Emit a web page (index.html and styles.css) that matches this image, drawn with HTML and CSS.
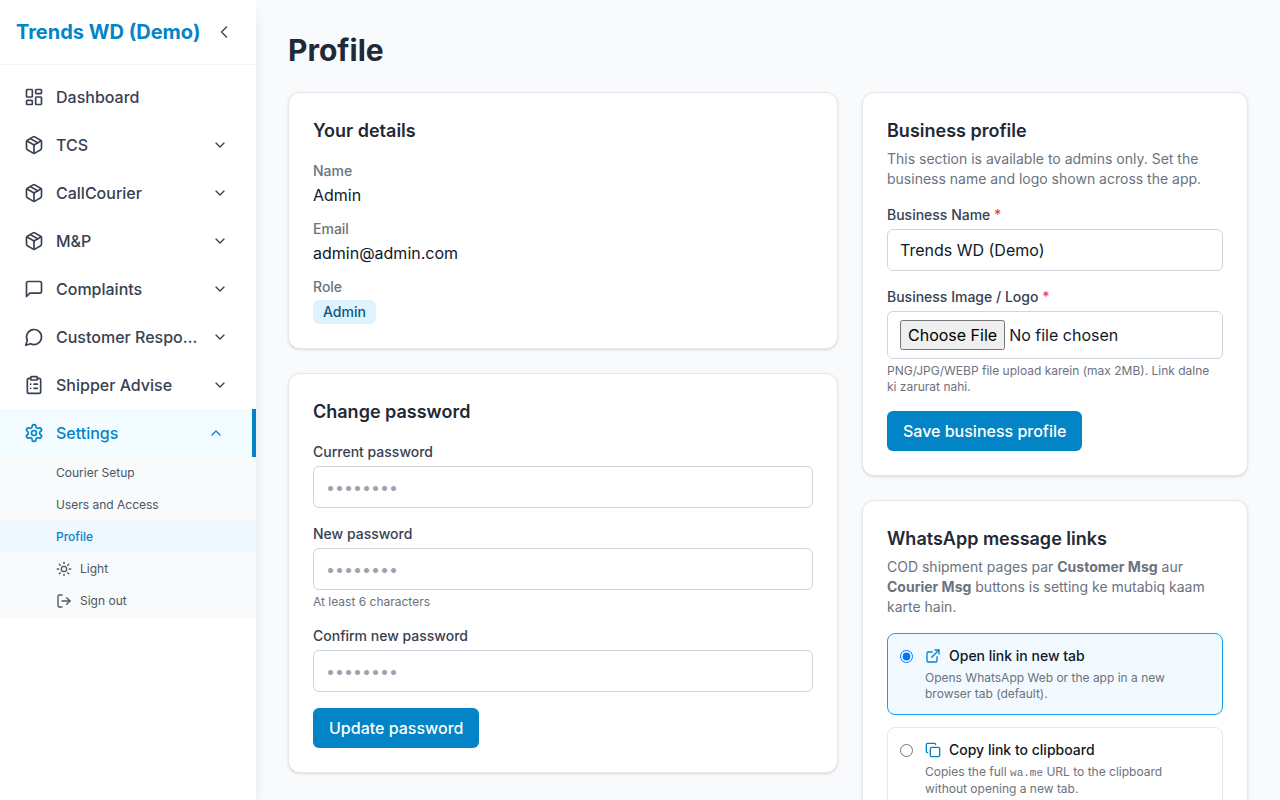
FILE: index.html
```html
<!DOCTYPE html>
<html lang="en">
<head>
    <meta charset="UTF-8">
    <meta name="viewport" content="width=device-width, initial-scale=1.0">
    <title>Profile - Trends WD (Demo)</title>
    <link rel="stylesheet" href="styles.css">
</head>
<body>
    <!-- shared icons -->
    <svg class="icon-defs" aria-hidden="true">
        <symbol id="icon-package" viewBox="0 0 24 24">
            <path d="m7.5 4.27 9 5.15"/>
            <path d="M21 8a2 2 0 0 0-1-1.73l-7-4a2 2 0 0 0-2 0l-7 4A2 2 0 0 0 3 8v8a2 2 0 0 0 1 1.73l7 4a2 2 0 0 0 2 0l7-4A2 2 0 0 0 21 16Z"/>
            <path d="m3.3 7 8.7 5 8.7-5"/>
            <path d="M12 22V12"/>
        </symbol>
        <symbol id="icon-down" viewBox="0 0 24 24">
            <path d="m6 9 6 6 6-6"/>
        </symbol>
    </svg>

    <div class="app">
        <aside class="sidebar">
            <div class="sidebar-header">
                <a href="#" class="brand">Trends WD (Demo)</a>
                <button type="button" class="collapse-btn" aria-label="Collapse sidebar">
                    <svg class="icon" viewBox="0 0 24 24"><path d="m15 18-6-6 6-6"/></svg>
                </button>
            </div>
            <nav class="nav">
                <a href="#" class="nav-item">
                    <svg class="icon" viewBox="0 0 24 24"><rect width="7" height="9" x="3" y="3" rx="1"/><rect width="7" height="5" x="14" y="3" rx="1"/><rect width="7" height="9" x="14" y="12" rx="1"/><rect width="7" height="5" x="3" y="16" rx="1"/></svg>
                    <span class="nav-text">Dashboard</span>
                </a>
                <button type="button" class="nav-item">
                    <svg class="icon"><use href="#icon-package"/></svg>
                    <span class="nav-text">TCS</span>
                    <svg class="icon icon-sm"><use href="#icon-down"/></svg>
                </button>
                <button type="button" class="nav-item">
                    <svg class="icon"><use href="#icon-package"/></svg>
                    <span class="nav-text">CallCourier</span>
                    <svg class="icon icon-sm"><use href="#icon-down"/></svg>
                </button>
                <button type="button" class="nav-item">
                    <svg class="icon"><use href="#icon-package"/></svg>
                    <span class="nav-text">M&amp;P</span>
                    <svg class="icon icon-sm"><use href="#icon-down"/></svg>
                </button>
                <button type="button" class="nav-item">
                    <svg class="icon" viewBox="0 0 24 24"><path d="M21 15a2 2 0 0 1-2 2H7l-4 4V5a2 2 0 0 1 2-2h14a2 2 0 0 1 2 2z"/></svg>
                    <span class="nav-text">Complaints</span>
                    <svg class="icon icon-sm"><use href="#icon-down"/></svg>
                </button>
                <button type="button" class="nav-item">
                    <svg class="icon" viewBox="0 0 24 24"><path d="M7.9 20A9 9 0 1 0 4 16.1L2 22Z"/></svg>
                    <span class="nav-text">Customer Response</span>
                    <svg class="icon icon-sm"><use href="#icon-down"/></svg>
                </button>
                <button type="button" class="nav-item">
                    <svg class="icon" viewBox="0 0 24 24"><rect width="8" height="4" x="8" y="2" rx="1" ry="1"/><path d="M16 4h2a2 2 0 0 1 2 2v14a2 2 0 0 1-2 2H6a2 2 0 0 1-2-2V6a2 2 0 0 1 2-2h2"/><path d="M12 11h4"/><path d="M12 16h4"/><path d="M8 11h.01"/><path d="M8 16h.01"/></svg>
                    <span class="nav-text">Shipper Advise</span>
                    <svg class="icon icon-sm"><use href="#icon-down"/></svg>
                </button>
                <button type="button" class="nav-item active" aria-expanded="true">
                    <svg class="icon" viewBox="0 0 24 24"><path d="M12.22 2h-.44a2 2 0 0 0-2 2v.18a2 2 0 0 1-1 1.73l-.43.25a2 2 0 0 1-2 0l-.15-.08a2 2 0 0 0-2.73.73l-.22.38a2 2 0 0 0 .73 2.73l.15.1a2 2 0 0 1 1 1.72v.51a2 2 0 0 1-1 1.74l-.15.09a2 2 0 0 0-.73 2.73l.22.38a2 2 0 0 0 2.73.73l.15-.08a2 2 0 0 1 2 0l.43.25a2 2 0 0 1 1 1.73V20a2 2 0 0 0 2 2h.44a2 2 0 0 0 2-2v-.18a2 2 0 0 1 1-1.73l.43-.25a2 2 0 0 1 2 0l.15.08a2 2 0 0 0 2.73-.73l.22-.39a2 2 0 0 0-.73-2.73l-.15-.08a2 2 0 0 1-1-1.74v-.5a2 2 0 0 1 1-1.74l.15-.09a2 2 0 0 0 .73-2.73l-.22-.38a2 2 0 0 0-2.73-.73l-.15.08a2 2 0 0 1-2 0l-.43-.25a2 2 0 0 1-1-1.73V4a2 2 0 0 0-2-2z"/><circle cx="12" cy="12" r="3"/></svg>
                    <span class="nav-text">Settings</span>
                    <svg class="icon icon-sm" viewBox="0 0 24 24"><path d="m18 15-6-6-6 6"/></svg>
                </button>
                <div class="submenu">
                    <a href="#" class="submenu-item">Courier Setup</a>
                    <a href="#" class="submenu-item">Users and Access</a>
                    <a href="#" class="submenu-item current" aria-current="page">Profile</a>
                    <button type="button" class="submenu-item">
                        <svg class="icon icon-sm" viewBox="0 0 24 24"><circle cx="12" cy="12" r="4"/><path d="M12 2v2"/><path d="M12 20v2"/><path d="m4.93 4.93 1.41 1.41"/><path d="m17.66 17.66 1.41 1.41"/><path d="M2 12h2"/><path d="M20 12h2"/><path d="m6.34 17.66-1.41 1.41"/><path d="m19.07 4.93-1.41 1.41"/></svg>
                        Light
                    </button>
                    <button type="button" class="submenu-item">
                        <svg class="icon icon-sm" viewBox="0 0 24 24"><path d="M9 21H5a2 2 0 0 1-2-2V5a2 2 0 0 1 2-2h4"/><path d="m16 17 5-5-5-5"/><path d="M21 12H9"/></svg>
                        Sign out
                    </button>
                </div>
            </nav>
        </aside>

        <main class="main">
            <h1>Profile</h1>
            <div class="grid">
                <div class="column column-wide">
                    <section class="card">
                        <h2>Your details</h2>
                        <dl class="details">
                            <div>
                                <dt>Name</dt>
                                <dd>Admin</dd>
                            </div>
                            <div>
                                <dt>Email</dt>
                                <dd>admin@admin.com</dd>
                            </div>
                            <div>
                                <dt>Role</dt>
                                <dd><span class="badge">Admin</span></dd>
                            </div>
                        </dl>
                    </section>

                    <section class="card">
                        <h2>Change password</h2>
                        <form class="form">
                            <div>
                                <label for="current-password">Current password</label>
                                <input type="password" id="current-password" class="input" placeholder="••••••••">
                            </div>
                            <div>
                                <label for="new-password">New password</label>
                                <input type="password" id="new-password" class="input" placeholder="••••••••">
                                <p class="hint">At least 6 characters</p>
                            </div>
                            <div>
                                <label for="confirm-password">Confirm new password</label>
                                <input type="password" id="confirm-password" class="input" placeholder="••••••••">
                            </div>
                            <button type="button" class="btn">Update password</button>
                        </form>
                    </section>
                </div>

                <div class="column column-narrow">
                    <section class="card">
                        <h2>Business profile</h2>
                        <p class="lead">This section is available to admins only. Set the business name and logo shown across the app.</p>
                        <form class="form">
                            <div>
                                <label for="business-name">Business Name <span class="required">*</span></label>
                                <input type="text" id="business-name" class="input" value="Trends WD (Demo)">
                            </div>
                            <div>
                                <label for="business-logo">Business Image / Logo <span class="required">*</span></label>
                                <input type="file" id="business-logo" class="input">
                                <p class="hint">PNG/JPG/WEBP file upload karein (max 2MB). Link dalne ki&nbsp;zarurat nahi.</p>
                            </div>
                            <button type="button" class="btn">Save business profile</button>
                        </form>
                    </section>

                    <section class="card">
                        <h2>WhatsApp message links</h2>
                        <p class="lead">COD shipment pages par <strong>Customer Msg</strong> aur <strong>Courier Msg</strong> buttons is setting ke mutabiq kaam karte hain.</p>
                        <div class="options">
                            <label class="option selected">
                                <input type="radio" name="link-mode" checked>
                                <span class="option-body">
                                    <span class="option-title">
                                        <svg class="icon icon-sm" viewBox="0 0 24 24"><path d="M15 3h6v6"/><path d="M10 14 21 3"/><path d="M18 13v6a2 2 0 0 1-2 2H5a2 2 0 0 1-2-2V8a2 2 0 0 1 2-2h6"/></svg>
                                        Open link in new tab
                                    </span>
                                    <span class="option-text">Opens WhatsApp Web or the app in a new browser tab (default).</span>
                                </span>
                            </label>
                            <label class="option">
                                <input type="radio" name="link-mode">
                                <span class="option-body">
                                    <span class="option-title">
                                        <svg class="icon icon-sm" viewBox="0 0 24 24"><rect width="14" height="14" x="8" y="8" rx="2" ry="2"/><path d="M4 16c-1.1 0-2-.9-2-2V4c0-1.1.9-2 2-2h10c1.1 0 2 .9 2 2"/></svg>
                                        Copy link to clipboard
                                    </span>
                                    <span class="option-text">Copies the full <code>wa.me</code> URL to the clipboard without&nbsp;opening a new tab.</span>
                                </span>
                            </label>
                        </div>
                    </section>
                </div>
            </div>
        </main>
    </div>
</body>
</html>
```
FILE: styles.css
```css
* {
    box-sizing: border-box;
    margin: 0;
    padding: 0;
}
body {
    font-family: Inter, "Liberation Sans", sans-serif;
    font-size: 16px;
    line-height: 24px;
    color: #111827;
    background-color: #f9fafc;
}
a {
    color: inherit;
    text-decoration: none;
}
button {
    font: inherit;
    color: inherit;
    background: none;
    border: none;
    cursor: pointer;
}
.icon-defs {
    display: none;
}
.icon {
    width: 20px;
    height: 20px;
    flex-shrink: 0;
    fill: none;
    stroke: currentColor;
    stroke-width: 2;
    stroke-linecap: round;
    stroke-linejoin: round;
}
.icon-sm {
    width: 16px;
    height: 16px;
}
.app {
    display: flex;
    height: 100vh;
    overflow: hidden;
}

/* Sidebar */
.sidebar {
    width: 256px;
    flex-shrink: 0;
    background-color: #fff;
    box-shadow: 0 10px 15px -3px rgba(0,0,0,0.1), 0 4px 6px -4px rgba(0,0,0,0.1);
}
.sidebar-header {
    display: flex;
    align-items: center;
    justify-content: space-between;
    height: 65px;
    padding: 0 16px;
    border-bottom: 1px solid #f3f4f6;
}
.brand {
    font-size: 20px;
    line-height: 28px;
    font-weight: 700;
    color: #0284c7;
}
.collapse-btn {
    display: flex;
    padding: 6px;
    color: #4b5563;
}
.nav {
    padding: 8px 0;
}
.nav-item {
    display: flex;
    align-items: center;
    gap: 12px;
    width: 100%;
    padding: 12px 28px 12px 24px;
    font-weight: 500;
    text-align: left;
    color: #374151;
}
.nav-text {
    flex: 1;
    min-width: 0;
    overflow: hidden;
    text-overflow: ellipsis;
    white-space: nowrap;
}
.nav-item.active {
    color: #0284c7;
    background-color: #f2fbff;
    border-right: 4px solid #0284c7;
}
.submenu {
    background-color: #f9fafc;
}
.submenu-item {
    display: flex;
    align-items: center;
    gap: 8px;
    width: 100%;
    padding: 8px 24px 8px 56px;
    font-size: 12px;
    line-height: 16px;
    color: #4b5563;
}
.submenu-item.current {
    font-weight: 500;
    color: #0284c7;
    background-color: #f0f8ff;
}

/* Content */
.main {
    flex: 1;
    min-width: 0;
    padding: 32px;
    overflow: hidden;
}
h1 {
    font-size: 30px;
    line-height: 36px;
    font-weight: 700;
    color: #1f2937;
    margin-bottom: 24px;
}
.grid {
    display: grid;
    grid-template-columns: repeat(12, minmax(0, 1fr));
    gap: 24px;
    align-items: start;
}
.column {
    display: flex;
    flex-direction: column;
    gap: 24px;
}
.column-wide {
    grid-column: span 7;
}
.column-narrow {
    grid-column: span 5;
}
.card {
    background-color: #fff;
    border: 1px solid #e5e7eb;
    border-radius: 12px;
    padding: 24px;
    box-shadow: 0 1px 3px rgba(0,0,0,0.1), 0 1px 2px -1px rgba(0,0,0,0.1);
}
h2 {
    font-size: 18px;
    line-height: 28px;
    font-weight: 600;
    color: #1f2937;
    margin-bottom: 16px;
}
h2:has(+ .lead) {
    margin-bottom: 4px;
}
.lead {
    font-size: 14px;
    line-height: 20px;
    color: #6b7280;
    margin-bottom: 16px;
}
.details {
    display: flex;
    flex-direction: column;
    gap: 12px;
}
.details dt {
    font-size: 14px;
    line-height: 20px;
    font-weight: 500;
    color: #6b7280;
}
.details dd {
    margin-top: 2px;
}
.badge {
    display: inline-flex;
    padding: 2px 10px;
    font-size: 14px;
    line-height: 20px;
    font-weight: 500;
    color: #075985;
    background-color: #e0f2fe;
    border-radius: 6px;
}

/* Forms */
.form {
    display: flex;
    flex-direction: column;
    align-items: flex-start;
    gap: 16px;
}
.form > div {
    width: 100%;
}
.form label {
    display: block;
    font-size: 14px;
    line-height: 20px;
    font-weight: 500;
    color: #374151;
    margin-bottom: 4px;
}
.required {
    color: #ef4444;
}
.input {
    display: block;
    width: 100%;
    padding: 8px 12px;
    font: inherit;
    color: #111827;
    background-color: #fff;
    border: 1px solid #d1d5db;
    border-radius: 6px;
}
.input::placeholder {
    color: #9ca3af;
}
.input::file-selector-button {
    font: inherit;
    padding: 3px 6px;
}
.hint {
    font-size: 12px;
    line-height: 16px;
    color: #6b7280;
    margin-top: 4px;
}
.btn {
    padding: 8px 16px;
    font-weight: 500;
    color: #fff;
    background-color: #0284c7;
    border-radius: 6px;
}
.options {
    display: flex;
    flex-direction: column;
    gap: 12px;
}
.option {
    display: flex;
    align-items: flex-start;
    gap: 12px;
    padding: 12px;
    border: 1px solid #e5e7eb;
    border-radius: 8px;
    cursor: pointer;
}
.option.selected {
    border-color: #0ea5e9;
    background-color: #f2f9ff;
}
.option input {
    flex-shrink: 0;
    margin-top: 4px;
}
.option-body {
    flex: 1;
    min-width: 0;
}
.option-title {
    display: flex;
    align-items: center;
    gap: 8px;
    font-size: 14px;
    line-height: 20px;
    font-weight: 500;
}
.option-title .icon {
    color: #0284c7;
}
.option-text {
    display: block;
    font-size: 12px;
    line-height: 16px;
    color: #6b7280;
    margin-top: 4px;
}
.option-text code {
    font-family: "Liberation Mono", monospace;
    font-size: 11px;
}
```
